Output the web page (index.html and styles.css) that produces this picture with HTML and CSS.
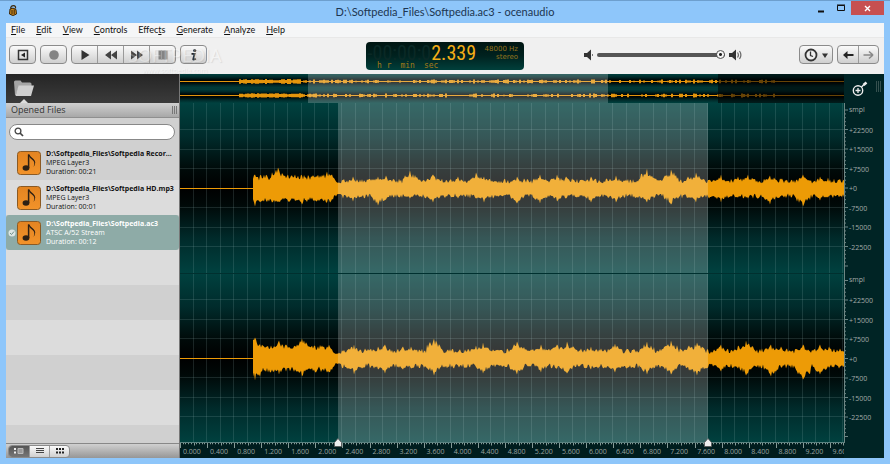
FILE: index.html
```html
<!DOCTYPE html>
<html lang="en">
<head>
<meta charset="utf-8">
<title>D:\Softpedia_Files\Softpedia.ac3 - ocenaudio</title>
<link rel="stylesheet" href="styles.css">
</head>
<body>
<div class="window">
  <header class="titlebar">
    <svg class="app-icon" viewBox="0 0 8 11" aria-hidden="true"><path d="M1.500 3.500Q2 .6 4.500 .6T6.500 3.500" fill="none" stroke="#3b2a10" stroke-width="1.200"/><path d="M1 4Q4 2 7 4.500L7.500 9Q4 12 .5 9Z" fill="#c8871c" stroke="#3a240a"/><path d="M3 5v4M5.200 4.500v4.500" stroke="#3a240a"/></svg>
    <h1>D:\Softpedia_Files\Softpedia.ac3 - ocenaudio</h1>
    <div class="win-controls">
      <button class="win-btn" aria-label="Minimize"><svg width="6" height="12"><path d="M0 9.500h6" stroke="#111" stroke-width="2"/></svg></button>
      <button class="win-btn" aria-label="Maximize"><svg width="8" height="8"><path d="M.5 1.500h7v5h-7zM0 1h8" fill="none" stroke="#111"/></svg></button>
      <button class="win-btn close" aria-label="Close"><svg width="7" height="7"><path d="M1 1l5 5M6 1l-5 5" stroke="#fff" stroke-width="1.400"/></svg></button>
    </div>
  </header>
  <div class="client">
    <nav class="menubar">
      <button><u>F</u>ile</button><button><u>E</u>dit</button><button><u>V</u>iew</button><button><u>C</u>ontrols</button><button>Effec<u>t</u>s</button><button><u>G</u>enerate</button><button><u>A</u>nalyze</button><button><u>H</u>elp</button>
    </nav>
    <div class="toolbar">
      <div class="tools">
        <div class="group"><button aria-label="Toggle sidebar"><svg width="12" height="12"><path d="M1.500 1.500h9v9h-9z" fill="none" stroke="#333" stroke-width="1.500"/><path d="M8 3.500v5L4 6z" fill="#222"/></svg></button></div>
        <div class="group"><button aria-label="Record"><svg width="12" height="12"><circle cx="6" cy="6" r="4.800" fill="#848484"/></svg></button></div>
        <div class="group">
          <button aria-label="Play"><svg width="12" height="12"><path d="M2.500 1v10L10.500 6z" fill="#333"/></svg></button>
          <button aria-label="Rewind"><svg width="14" height="12"><path d="M7 1.500v9L1 6zM13 1.500v9L7 6z" fill="#444"/></svg></button>
          <button aria-label="Forward"><svg width="14" height="12"><path d="M1 1.500v9L7 6zM7 1.500v9L13 6z" fill="#444"/></svg></button>
          <button aria-label="Stop"><svg width="12" height="12"><path d="M1.500 1.500h9v9h-9z" fill="#848484"/><path d="M4.500 1.500v9M8 1.500v9" stroke="#a0a0a0"/></svg></button>
        </div>
        <div class="group"><button aria-label="Information"><svg width="10" height="14"><circle cx="5.700" cy="2.500" r="1.600" fill="#222"/><path d="M2.500 5.800H5.600L4.200 11.400Q4.400 12.200 6.800 10.800" fill="none" stroke="#222" stroke-width="1.800"/></svg></button></div>
        <div class="watermark" aria-hidden="true"><span>SOFTPEDIA</span><small>www.softpedia.com</small></div>
      </div>
      <div class="lcd">
        <div class="time"><span class="ghost">-00:00:0</span><span>2.339</span></div>
        <div class="units"><span>h r</span><span>min</span><span>sec</span></div>
        <div class="format">48000 Hz<br>stereo</div>
      </div>
      <div class="right-tools">
        <div class="volume">
          <svg width="9" height="12"><path d="M0 4h3l4-3.500v11L3 8H0z" fill="#333"/><path d="M8.500 5v2" stroke="#777"/></svg>
          <input type="range" min="0" max="100" value="100" aria-label="Volume">
          <svg width="13" height="12"><path d="M0 4h3l4-3.500v11L3 8H0z" fill="#333"/><path d="M8.500 3.500q1.800 2.500 0 5M10.500 2q2.800 4 0 8" fill="none" stroke="#666" stroke-width="1.200"/></svg>
        </div>
        <div class="nav-tools">
          <div class="group"><button class="history" aria-label="History"><svg width="24" height="14"><circle cx="7" cy="7" r="5.500" fill="#eee" stroke="#333" stroke-width="1.800"/><path d="M6.500 3.500V7.500L9 8.500" fill="none" stroke="#333" stroke-width="1.300"/><path d="M18 5.500h6l-3 4.500z" fill="#333"/></svg></button></div>
          <div class="group narrow"><button aria-label="Back"><svg width="11" height="10"><path d="M0 5L4.500 1v8z" fill="#222"/><path d="M4 5h6.500" stroke="#222" stroke-width="2"/></svg></button><button aria-label="Next"><svg width="11" height="10"><path d="M10 5L6 1.500M10 5L6 8.500M.5 5h9" fill="none" stroke="#888" stroke-width="1.600"/></svg></button></div>
        </div>
      </div>
    </div>
    <main class="content">
      <aside class="sidebar">
        <div class="tabs"><button aria-label="Files"><svg width="22" height="18"><path d="M1 3q0-1.500 1.500-1.500h5L9 3.500h8q1.500 0 1.500 1.500v2H6L3 16H2z" fill="#a5a5a5"/><path d="M5.500 6.500H21L18 17H2.500z" fill="#cfcfcf"/></svg></button></div>
        <h2><span>Opened Files</span><svg width="6" height="8"><path d="M.5 0v8M2.500 0v8M4.500 0v8" stroke="#777"/></svg></h2>
        <label class="search"><svg width="10" height="10"><circle cx="4" cy="4" r="2.900" fill="none" stroke="#444" stroke-width="1.300"/><path d="M6 6l3 3" stroke="#444" stroke-width="1.700"/></svg><input type="search" aria-label="Search files"></label>
        <ul class="files">
          <li><span class="state"></span><svg class="note"><use href="#note"/></svg><div><b>D:\Softpedia_Files\Softpedia Recor...</b><span>MPEG Layer3</span><span>Duration: 00:21</span></div></li>
          <li><span class="state"></span><svg class="note"><use href="#note"/></svg><div><b>D:\Softpedia_Files\Softpedia HD.mp3</b><span>MPEG Layer3</span><span>Duration: 00:01</span></div></li>
          <li class="selected"><span class="state"><svg width="8" height="8"><circle cx="4" cy="4" r="3.500" fill="#dce6e4"/><path d="M2 4l1.500 1.500L6 2.500" fill="none" stroke="#6f8f8a"/></svg></span><svg class="note"><use href="#note"/></svg><div><b>D:\Softpedia_Files\Softpedia.ac3</b><span>ATSC A/52 Stream</span><span>Duration: 00:12</span></div></li>
        </ul>
        <footer class="views">
          <div class="group view-group">
            <button class="active" aria-label="Details"><svg width="10" height="6"><path d="M0 1h2M0 4.500h2" stroke="#eee" stroke-width="2"/><path d="M4 .5h5v5H4z" fill="#999" stroke="#bbb"/></svg></button>
            <button aria-label="List"><svg width="8" height="6"><path d="M0 .5h8M0 2.500h8M0 4.500h8" stroke="#444"/></svg></button>
            <button aria-label="Grid"><svg width="8" height="6"><path d="M0 1h8M0 4.500h8" stroke="#222" stroke-width="2" stroke-dasharray="2 1"/></svg></button>
          </div>
        </footer>
      </aside>
      <section class="editor">
        <svg class="overview" viewBox="0 0 664 29" preserveAspectRatio="none" id="overview"></svg>
        <div class="wave"><svg viewBox="0 0 664 340" preserveAspectRatio="none" id="wave"></svg></div>
        <div class="time-ruler"><svg id="time-ticks" viewBox="0 0 664 6" preserveAspectRatio="none"></svg><div class="time-labels" id="time-labels"></div></div>
        <div class="level-ruler">
          <div class="zoom-tools"><button aria-label="Zoom"><svg width="16" height="16"><circle cx="6" cy="9.500" r="4.700" fill="none" stroke="#eee" stroke-width="1.400"/><path d="M3.500 9.500h5M6 7v5" stroke="#eee" stroke-width="1.300"/><path d="M9.500 6L12 3.500" stroke="#eee" stroke-width="1.500"/><path d="M11.500 4L14.500 1.500" stroke="#eee" stroke-width="2.600"/></svg></button><svg width="6" height="11"><path d="M.5 0v11M2.500 0v11M4.500 0v11" stroke="#35504f"/></svg></div>
          <svg class="levels" id="levels"></svg>
        </div>
      </section>
    </main>
  </div>
</div>
<svg class="defs" aria-hidden="true"><defs>
  <linearGradient id="orange" x1="0" y1="0" x2="0" y2="1"><stop offset="0" stop-color="#e38421"/><stop offset="1" stop-color="#f2932a"/></linearGradient>
  <linearGradient id="channel" x1="0" y1="0" x2="0" y2="1"><stop offset="0" stop-color="#00413f"/><stop offset=".2" stop-color="#002b2b"/><stop offset=".4" stop-color="#000908"/><stop offset=".5" stop-color="#000"/><stop offset=".6" stop-color="#000908"/><stop offset=".8" stop-color="#002b2b"/><stop offset="1" stop-color="#00413f"/></linearGradient>
  <symbol id="note" viewBox="0 0 24 24"><rect x=".5" y=".5" width="23" height="23" rx="3" fill="url(#orange)" stroke="#8b5a24"/><ellipse cx="9" cy="17" rx="3.400" ry="2.700" fill="#2d2014"/><path d="M11.600 17V3.500" stroke="#2d2014" stroke-width="1.500"/><path d="M11 3.500Q12.500 7 15.500 9T16.500 16Q20 11 16.500 8T12.300 3.500z" fill="#2d2014"/></symbol>
</defs></svg>
<script src="wave.js"></script>
</body>
</html>
```
FILE: styles.css
```css
* { box-sizing: border-box; }
body { margin: 0; font-family: "Open Sans", "Noto Sans", sans-serif; color: #222; }
button { border: 0; padding: 0; margin: 0; background: none; font: inherit; color: inherit; display: flex; align-items: center; justify-content: center; }
svg { display: block; flex: none; }
.defs { position: absolute; width: 0; height: 0; }
.window { display: flex; flex-direction: column; height: 100vh; padding: 0 6px 6px; background: #8ec6fa; border-top: 1px solid #6d9fce; }
.titlebar { display: grid; grid-template-columns: 1fr auto 1fr; height: 22px; flex: none; }
.app-icon { width: 8px; height: 11px; margin: 4px 0 0 3px; }
h1 { margin: 0; font-family: Lato, sans-serif; font-size: 11px; line-height: 22px; font-weight: 400; color: #1c3550; }
.win-controls { display: flex; justify-content: flex-end; align-items: flex-start; }
.win-btn { width: 20px; height: 14px; }
.win-btn.close { width: 33px; background: #c75050; }
.client { flex: 1; min-height: 0; display: flex; flex-direction: column; background: #f0f0f0; }
.menubar { display: flex; gap: 11px; height: 15px; flex: none; padding-left: 5px; background: #f5f6f7; border-bottom: 1px solid #e8e8e8; font-family: Lato, sans-serif; font-size: 9px; line-height: 14px; color: #111; }
.toolbar { display: grid; grid-template-columns: 1fr 158px 1fr; align-items: center; height: 36px; flex: none; padding-bottom: 3px; }
.tools { position: relative; display: flex; gap: 4px; padding-left: 3px; }
.group { display: flex; height: 19px; border: 1px solid #8b8b8b; border-radius: 4px; background: linear-gradient(#fafafa, #cfcfcf); overflow: hidden; }
.group button { width: 25px; }
.group button + button { width: 26px; border-left: 1px solid #9a9a9a; }
.group .history { width: 32px; }
.narrow button, .narrow button + button { width: 20px; }
.watermark { position: absolute; left: 122px; top: 0; display: flex; flex-direction: column; align-items: center; color: #fff; opacity: .25; text-shadow: 1px 1px 1px #999; font-size: 18px; line-height: 20px; pointer-events: none; }
.watermark small { font-size: 7px; line-height: 12px; }
.lcd { display: grid; grid-template-columns: 110px 1fr; grid-template-rows: 20px 8px; height: 28px; border-radius: 4px; background: linear-gradient(#001512, #00221f 50%, #003f3b); color: #f4ae17; margin-top: 3px; }
.time { display: flex; justify-content: flex-end; font: 20px/22px "Liberation Sans Narrow", "Roboto Condensed", Roboto, sans-serif; white-space: nowrap; }
.ghost { color: #0a2926; }
.units { grid-row: 2; display: flex; gap: 9px; padding-left: 11px; color: #a27a18; font: 8px/8px "DejaVu Sans Mono", monospace; }
.format { grid-column: 2; grid-row: 1; padding: 3px 6px 0 0; text-align: right; font: 7px/8px "DejaVu Sans", sans-serif; color: #94741d; white-space: nowrap; }
.right-tools { display: flex; justify-content: space-between; padding: 0 5px 0 60px; }
.volume, .nav-tools { display: flex; align-items: center; gap: 4px; }
.volume input { appearance: none; width: 128px; height: 12px; margin: 0; background: none; }
.volume input::-webkit-slider-runnable-track { height: 4px; border-radius: 2px; background: #555; }
.volume input::-webkit-slider-thumb { appearance: none; width: 9px; height: 9px; margin-top: -3px; border: 1px solid #555; border-radius: 50%; background: radial-gradient(#222 0 1px, #f5f5f5 2px); }
.content { flex: 1; min-height: 0; display: grid; grid-template-columns: 174px 1fr; }
.sidebar { display: flex; flex-direction: column; min-height: 0; background: #d0d0d0; border-right: 1px solid #777; }
.tabs { height: 29px; flex: none; padding: 5px 7px; background: linear-gradient(#252525, #3b3b3b); position: relative; }
.tabs::after { content: ""; position: absolute; left: 14px; bottom: 0; border: 4px solid transparent; border-top: 0; border-bottom-color: #ddd; }
h2 { display: flex; align-items: center; justify-content: space-between; height: 15px; flex: none; margin: 0; padding: 0 1px 0 5px; background: linear-gradient(#d0d0d0, #a8a8a8); border-bottom: 1px solid #8f8f8f; font-size: 9px; line-height: 14px; font-weight: 400; color: #333; }
.search { display: flex; align-items: center; gap: 2px; height: 16px; flex: none; margin: 6px 4px 5px 3px; padding: 0 4px; background: #fff; border: 1px solid #888; border-radius: 8px; }
.search input { flex: 1; min-width: 0; border: 0; padding: 0; outline: 0; background: none; font: 9px/12px "Open Sans", sans-serif; }
.files { flex: 1; min-height: 0; margin: 0; padding: 0; list-style: none; background: repeating-linear-gradient(#d0d0d0 0 35px, #dcdcdc 35px 70px); }
.files li { display: flex; align-items: center; height: 35px; padding-left: 2px; font: 7px/9px "Open Sans", sans-serif; color: #111; }
.files li div { min-width: 0; white-space: nowrap; }
.files b, .files div span { display: block; }
.state { width: 9px; flex: none; }
.note { width: 24px; height: 24px; margin-right: 5px; }
.files .selected { background: #8eaba7; color: #fff; border-radius: 3px; }
.views { display: flex; align-items: center; height: 15px; flex: none; padding-left: 2px; background: linear-gradient(#d0d0d0, #969696); border-top: 1px solid #888; }
.view-group { height: 13px; }
.view-group button, .view-group button + button { width: 20px; }
.view-group .active { background: linear-gradient(#555, #777); }
.editor { display: grid; grid-template-columns: 1fr 40px; grid-template-rows: 29px 1fr 15px; min-width: 0; min-height: 0; background: #001d1e; }
.overview { width: 100%; height: 100%; }
.wave { min-height: 0; position: relative; z-index: 1; }
.wave svg { width: 100%; height: 100%; overflow: visible; }
.time-ruler { grid-column: 1; grid-row: 3; overflow: hidden; font: 7px/8px "Open Sans", sans-serif; color: #9aa3a0; background: #001d1e; }
.time-ruler svg { width: 100%; height: 5px; }
.time-labels { display: flex; }
.time-labels span { flex: 0 0 4.078%; padding-left: 3px; white-space: nowrap; overflow: visible; }
.level-ruler { grid-column: 2; grid-row: 1 / 4; display: flex; flex-direction: column; min-height: 0; background: #002425; }
.zoom-tools { display: flex; justify-content: space-between; height: 29px; flex: none; padding: 7px 2px 0 8px; }
.zoom-tools button { align-items: flex-start; }
.levels { flex: 1; width: 100%; min-height: 0; font: 7px "Open Sans", sans-serif; fill: #a3aaa7; margin-bottom: 15px; }
```
FILE: wave.js
```js
const PX = 67.7;
let seed = 11;
const rnd = () => (seed = (seed * 16807) % 2147483647) / 2147483647;

// Peaks as [x, height above the axis, depth below the axis]
const first = [[75,14,18],[84,12,12],[98,21,13],[108,14,12],[115,14,11],[122,13,16],[133,13,11],[140,13,11],[147,17,14],[153,11,11],[173,12,13],[180,8,8],[198,12,17],[206,13,11],[230,18,10],[240,9,8],[253,14,14],[278,12,10],[296,16,10],[304,12,14],[337,12,15],[360,14,15],[377,14,13],[386,12,10],[411,12,14],[436,13,14],[467,20,14],[491,19,16],[508,12,9],[516,16,14],[541,14,14],[558,12,9],[568,14,10],[590,13,16],[594,11,9],[623,14,18],[640,12,12],[648,11,9]];
const second = [[75,21,22],[84,12,12],[99,18,16],[106,14,12],[115,12,10],[122,20,18],[134,12,11],[147,12,14],[174,14,16],[180,9,8],[198,12,11],[205,14,15],[223,12,11],[231,12,10],[254,20,17],[268,9,8],[279,8,9],[296,13,8],[303,16,15],[337,17,16],[361,14,14],[377,14,10],[387,17,15],[411,12,11],[435,15,14],[467,17,16],[491,18,16],[509,13,12],[517,16,17],[541,14,13],[558,13,10],[566,18,17],[591,14,18],[601,12,9],[623,14,21],[640,14,16],[649,12,9],[660,10,8]];

function outline(peaks, cy) {
  const at = (x, k) => {
    const loud = x < 153;
    let h = loud ? 8 + rnd() * 6 : 5 + rnd() * 5;
    if (x > 154 && x < 162) h = 4 + rnd() * 2;
    for (const p of peaks) {
      const d = Math.abs(x - p[0]);
      if (d === 0) h = Math.max(h, p[k]);
      else if (d < 8) h = Math.max(h, (p[k] - .5 - d * .7) * (.65 + rnd() * .35));
    }
    return h;
  };
  let top = "", bottom = "";
  for (let x = 73; x <= 664; x++) {
    top += `L${x} ${(cy - at(x, 1)).toFixed(1)}`;
    bottom = `L${x} ${(cy + at(x, 2)).toFixed(1)}` + bottom;
  }
  return `<path d="M0 ${cy - .6}H73${top}${bottom}L73 ${cy + .6}H0Z" fill="#ed9b06"/>`;
}

let s = `<rect width="664" height="170" fill="url(#channel)"/><rect y="170" width="664" height="170" fill="url(#channel)"/>`;
for (let x = PX / 5; x < 664; x += PX / 5) s += `<path d="M${Math.round(x) - .5} 0V340" stroke="#9bb" stroke-opacity=".17"/>`;
for (const cy of [85.5, 255.5])
  for (const d of [-3, -2, -1, 1, 2, 3]) s += `<path d="M0 ${Math.round(cy + d * 19.5) - .5}H664" stroke="#9bb" stroke-opacity=".17"/>`;
s += outline(first, 85.500) + outline(second, 255.500);
s += `<rect x="158" width="370" height="340" fill="#fff" fill-opacity=".21"/><path d="M0 170.500H664" stroke="#00302f"/><path d="M0 339.500H664" stroke="#5b8280"/>`;
for (const x of [158, 528]) s += `<path d="M${x - 3.500} 343.500v-4l3.500-4 3.500 4v4z" fill="#eee" stroke="#555" stroke-width=".8"/>`;
document.getElementById("wave").innerHTML = s;

let o = `<rect width="664" height="14.500" fill="url(#channel)"/><rect y="14.500" width="664" height="14.500" fill="url(#channel)"/>`;
for (const y of [7.500, 21.500]) {
  o += `<path d="M0 ${y}H664" stroke="#e4950c"/>`;
  for (let x = 60; x < 595; x += 2) {
    const dense = x < 122;
    if (dense || rnd() > .5) {
      const h = (dense ? 1.200 : .8) + rnd() * 1.200;
      o += `<path d="M${x} ${y - h}V${y + h}" stroke="#e4950c" stroke-width="2"/>`;
    }
  }
}
o += `<rect x="128" width="300" height="29" fill="#fff" fill-opacity=".21"/><rect x="538" width="126" height="29" fill-opacity=".55"/>`;
document.getElementById("overview").innerHTML = o;

let t = "", labels = "";
for (let i = 0; i * PX / 25 < 664; i++) {
  const x = Math.round(i * PX / 25) + .5;
  t += `<path d="M${x} 0V${i % 10 === 0 ? 6 : i % 5 === 0 ? 3 : 1.5}" stroke="#93a6a3"/>`;
}
for (let i = 0; i < 25; i++) labels += `<span>${(i * .4).toFixed(3)}</span>`;
document.getElementById("time-ticks").innerHTML = t;
document.getElementById("time-labels").innerHTML = labels;

let v = `<path d="M.5 0V2000" stroke="#6e8684"/>`;
const pct = y => (y / 340 * 100).toFixed(2) + "%";
for (const cy of [85, 255.500]) {
  for (let d = -20; d <= 20; d++) {
    const y = pct(cy + d * 3.900);
    v += `<line x1="0" x2="${d % 5 ? 2 : 4}" y1="${y}" y2="${y}" stroke="#6e8684"/>`;
  }
  v += `<text x="5" y="${pct(cy - 76)}">smpl</text>`;
  for (const d of [3, 2, 1, 0, -1, -2, -3])
    v += `<text x="5" y="${pct(cy + 3 - d * 19.500)}">${d < 0 ? "" : "+"}${d * 7500}</text>`;
}
document.getElementById("levels").innerHTML = v;
```
